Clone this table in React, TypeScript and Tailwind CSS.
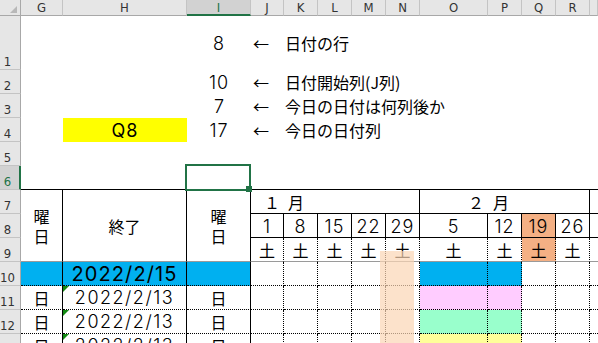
import React from "react";

const BODY = "font-['Inter','Noto_Sans_CJK_JP',sans-serif] font-light text-black";
const BODYN = "font-['Inter','Noto_Sans_CJK_JP',sans-serif] font-normal text-black";
const CJK = "font-['Noto_Sans_CJK_JP',sans-serif] text-black";
const NARROW = "font-['Liberation_Sans_Narrow','DejaVu_Sans_Condensed','Liberation_Sans',sans-serif]";

const RS = "border-r border-r-black";
const RD = "border-r border-r-black [border-right-style:dotted]";
const BS = "border-b border-b-black";
const BD = "border-b border-b-black [border-bottom-style:dotted]";
const BG = "border-b border-b-[#9a9a9a]";
const CEN = "flex items-center justify-center whitespace-nowrap";
const NOTE = "flex items-center whitespace-nowrap pl-[2px] text-[16px] " + CJK;

function ColHead({ label, sel }: { label?: string; sel?: boolean }) {
  return (
    <div
      className={
        sel
          ? "flex items-center justify-center bg-[#d2d2d2] border-r border-r-[#c4c4c4] border-b-2 border-b-[#217346] text-[#217346] text-[13px] leading-none " + NARROW
          : "flex items-center justify-center bg-[#e6e6e6] border-r border-r-[#c4c4c4] border-b border-b-[#a8a8a8] text-[#333] text-[13px] leading-none " + NARROW
      }
    >
      {label}
    </div>
  );
}

function RowHead({ n, sel }: { n: string; sel?: boolean }) {
  return (
    <div
      className={
        sel
          ? "flex items-end bg-[#d2d2d2] border-r-2 border-r-[#217346] border-b border-b-[#c4c4c4] text-[#217346]"
          : "flex items-end bg-[#e6e6e6] border-r border-r-[#a8a8a8] border-b border-b-[#c4c4c4] text-[#333]"
      }
    >
      <span className={"w-[15px] text-center text-[13px] leading-none pb-[1px] " + NARROW}>{n}</span>
    </div>
  );
}

function Tri() {
  return (
    <div className="absolute top-0 left-0 w-[6px] h-[6px] bg-[#128a12] [clip-path:polygon(0_0,100%_0,0_100%)]" />
  );
}

function DataRow({
  n,
  big,
  date,
  youbi,
  op,
  tri,
}: {
  n: string;
  big?: boolean;
  date: string;
  youbi: string;
  op: string;
  tri?: boolean;
}) {
  const leftBg = big ? " bg-[#00b0f0]" : "";
  return (
    <>
      <RowHead n={n} />
      <div className={`${CEN} ${RS} ${BD} text-[16px] ${CJK}${leftBg}`}>{youbi}</div>
      <div
        className={`relative ${CEN} ${RS} ${BD}${leftBg} ${
          big ? "text-[20px] tracking-[1.1px] " + BODYN : "text-[18px] tracking-[1.5px] " + BODY
        }`}
      >
        {tri ? <Tri /> : null}
        {date}
      </div>
      <div className={`${CEN} ${RS} ${BD} text-[16px] ${CJK}${leftBg}`}>{youbi}</div>
      <div className={`${RD} ${BD}`} />
      <div className={`${RD} ${BD}`} />
      <div className={`${RD} ${BD}`} />
      <div className={`${RD} ${BD}`} />
      <div className={`${RD} ${BD}`} />
      <div className={`${RD} ${BD} ${op}`} />
      <div className={`${RD} ${BD} ${op}`} />
      <div className={`${RD} ${BD}`} />
      <div className={`${RD} ${BD}`} />
      <div className={`${BD}`} />
    </>
  );
}

export default function App() {
  const days = ["1", "8", "15", "22", "29", "5", "12", "19", "26"];
  return (
    <div className="relative w-[598px] h-[343px] overflow-hidden bg-white">
      <div className="grid w-[598px] grid-cols-[21px_42px_124px_64px_33px_34px_34px_34px_34px_68px_34px_34px_34px_1fr] grid-rows-[16px_54px_24px_24px_24px_24px_24px_24px_24px_24px_24px_24px_24px_24px]">
        {/* column headers */}
        <div className="relative bg-[#e6e6e6] border-r border-r-[#a8a8a8] border-b border-b-[#a8a8a8]">
          <svg className="absolute left-[10px] top-[6px]" width="7" height="7" viewBox="0 0 7 7">
            <polygon points="7,0 7,7 0,7" fill="#b8b8b8" />
          </svg>
        </div>
        <ColHead label="G" />
        <ColHead label="H" />
        <ColHead label="I" sel />
        <ColHead label="J" />
        <ColHead label="K" />
        <ColHead label="L" />
        <ColHead label="M" />
        <ColHead label="N" />
        <ColHead label="O" />
        <ColHead label="P" />
        <ColHead label="Q" />
        <ColHead label="R" />
        <ColHead />

        {/* row 1 */}
        <RowHead n="1" />
        <div />
        <div />
        <div className={`${CEN} text-[18px] tracking-[1px] ${BODY}`}>8</div>
        <div className={`col-span-10 ${NOTE}`}>←　日付の行</div>

        {/* row 2 */}
        <RowHead n="2" />
        <div />
        <div />
        <div className={`${CEN} text-[18px] tracking-[1px] ${BODY}`}>10</div>
        <div className={`col-span-10 ${NOTE}`}>←　日付開始列(J列)</div>

        {/* row 3 */}
        <RowHead n="3" />
        <div />
        <div />
        <div className={`${CEN} text-[18px] ${BODY}`}>7</div>
        <div className={`col-span-10 ${NOTE}`}>←　今日の日付は何列後か</div>

        {/* row 4 */}
        <RowHead n="4" />
        <div />
        <div className={`${CEN} bg-[#ffff00] text-[18px] tracking-[1px] ${BODYN}`}>Q8</div>
        <div className={`${CEN} text-[18px] tracking-[1px] ${BODY}`}>17</div>
        <div className={`col-span-10 ${NOTE}`}>←　今日の日付列</div>

        {/* row 5 */}
        <RowHead n="5" />
        <div className="col-span-13" />

        {/* row 6 */}
        <RowHead n="6" sel />
        <div className={BS} />
        <div className={BS} />
        <div className={`relative ${BS}`}>
          <div className="absolute left-[-2px] top-[-2px] w-[66px] h-[27px] border-2 border-[#217346]" />
          <div className="absolute left-[59px] top-[20px] w-[6px] h-[6px] bg-[#217346]" />
        </div>
        <div className={`col-span-10 ${BS}`} />

        {/* row 7 */}
        <RowHead n="7" />
        <div className={`row-span-3 flex flex-col items-center justify-center leading-[20px] text-[16px] ${RS} ${BG} ${CJK}`}>
          <span>曜</span>
          <span>日</span>
        </div>
        <div className={`row-span-3 ${CEN} text-[16px] ${RS} ${BG} ${CJK}`}>終了</div>
        <div className={`row-span-3 flex flex-col items-center justify-center leading-[20px] text-[16px] ${RS} ${BG} ${CJK}`}>
          <span>曜</span>
          <span>日</span>
        </div>
        <div className={`col-span-5 flex items-center pl-[13px] gap-[8px] text-[16px] ${RS} ${BS} ${CJK}`}>
          <span>１</span>
          <span>月</span>
        </div>
        <div className={`col-span-4 flex items-center pl-[48px] gap-[9px] text-[16px] ${RS} ${BS} ${CJK}`}>
          <span>２</span>
          <span>月</span>
        </div>
        <div className={BS} />

        {/* row 8 */}
        <RowHead n="8" />
        {days.map((d, i) => (
          <div
            key={"d" + i}
            className={`${CEN} pt-[2px] text-[18px] tracking-[1px] ${RS} ${BS} ${BODY} ${i === 7 ? "bg-[#f4b084]" : ""}`}
          >
            {d}
          </div>
        ))}
        <div className={BS} />

        {/* row 9 */}
        <RowHead n="9" />
        {days.map((d, i) => (
          <div
            key={"w" + i}
            className={`${CEN} text-[16px] ${RD} ${BG} ${CJK} ${i === 7 ? "bg-[#f4b084]" : ""}`}
          >
            土
          </div>
        ))}
        <div className={BG} />

        {/* rows 10-13 */}
        <DataRow n="10" big date="2022/2/15" youbi="" op="bg-[#00b0f0]" />
        <DataRow n="11" tri date="2022/2/13" youbi="日" op="bg-[#ffccff]" />
        <DataRow n="12" tri date="2022/2/13" youbi="日" op="bg-[#99ffcc]" />
        <DataRow n="13" tri date="2022/2/13" youbi="日" op="bg-[#ffff99]" />
      </div>

      {/* translucent shape over column N */}
      <div className="absolute left-[380px] top-[251px] w-[34px] h-[100px] bg-[#fbd5b5]/70" />
    </div>
  );
}
